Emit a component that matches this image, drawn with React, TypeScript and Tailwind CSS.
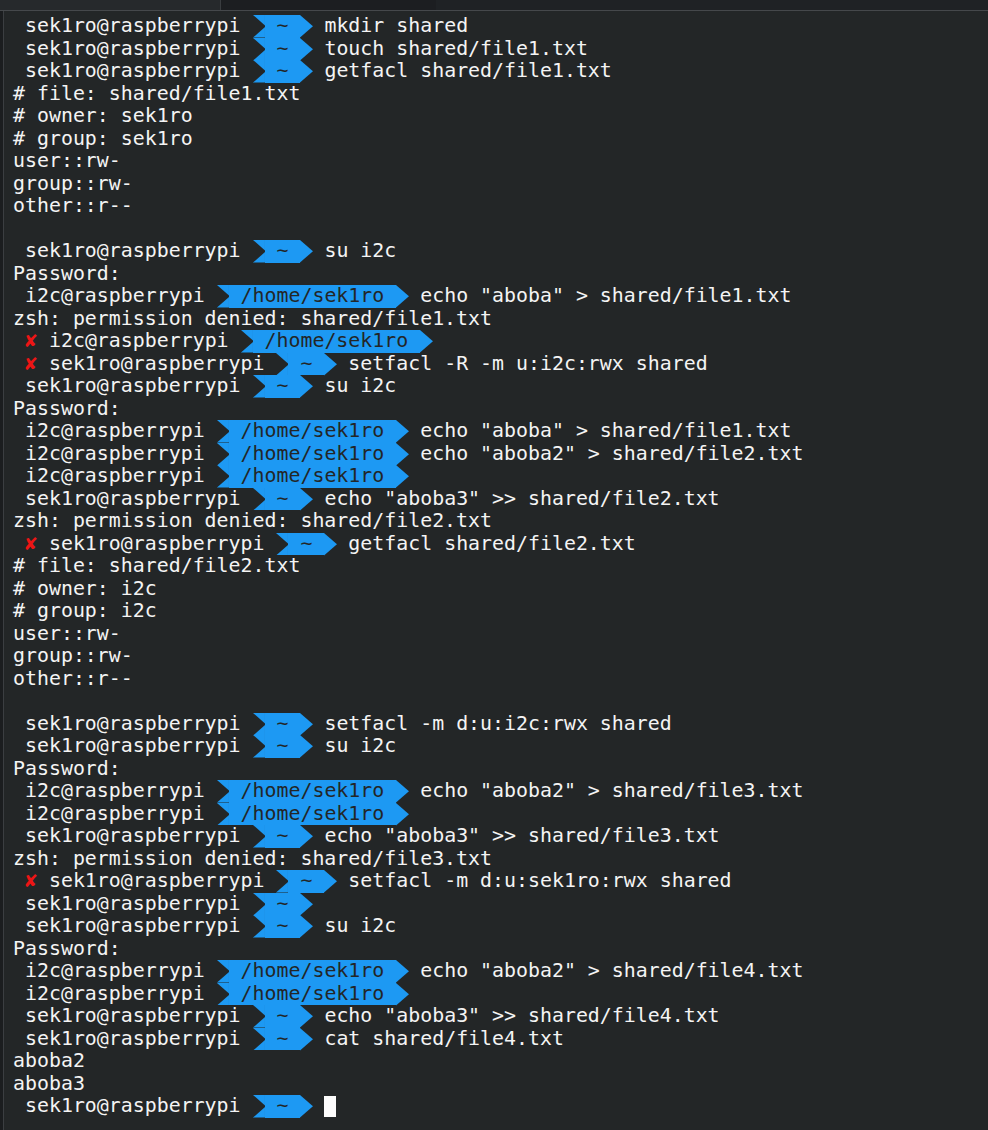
import React from "react";

type Line =
  | { t: "p"; u: "s" | "i"; err?: boolean; cmd?: string }
  | { t: "x"; s: string }
  | { t: "c" };

const L: Line[] = [
  { t: "p", u: "s", cmd: "mkdir shared" },
  { t: "p", u: "s", cmd: "touch shared/file1.txt" },
  { t: "p", u: "s", cmd: "getfacl shared/file1.txt" },
  { t: "x", s: "# file: shared/file1.txt" },
  { t: "x", s: "# owner: sek1ro" },
  { t: "x", s: "# group: sek1ro" },
  { t: "x", s: "user::rw-" },
  { t: "x", s: "group::rw-" },
  { t: "x", s: "other::r--" },
  { t: "x", s: "" },
  { t: "p", u: "s", cmd: "su i2c" },
  { t: "x", s: "Password:" },
  { t: "p", u: "i", cmd: 'echo "aboba" > shared/file1.txt' },
  { t: "x", s: "zsh: permission denied: shared/file1.txt" },
  { t: "p", u: "i", err: true },
  { t: "p", u: "s", err: true, cmd: "setfacl -R -m u:i2c:rwx shared" },
  { t: "p", u: "s", cmd: "su i2c" },
  { t: "x", s: "Password:" },
  { t: "p", u: "i", cmd: 'echo "aboba" > shared/file1.txt' },
  { t: "p", u: "i", cmd: 'echo "aboba2" > shared/file2.txt' },
  { t: "p", u: "i" },
  { t: "p", u: "s", cmd: 'echo "aboba3" >> shared/file2.txt' },
  { t: "x", s: "zsh: permission denied: shared/file2.txt" },
  { t: "p", u: "s", err: true, cmd: "getfacl shared/file2.txt" },
  { t: "x", s: "# file: shared/file2.txt" },
  { t: "x", s: "# owner: i2c" },
  { t: "x", s: "# group: i2c" },
  { t: "x", s: "user::rw-" },
  { t: "x", s: "group::rw-" },
  { t: "x", s: "other::r--" },
  { t: "x", s: "" },
  { t: "p", u: "s", cmd: "setfacl -m d:u:i2c:rwx shared" },
  { t: "p", u: "s", cmd: "su i2c" },
  { t: "x", s: "Password:" },
  { t: "p", u: "i", cmd: 'echo "aboba2" > shared/file3.txt' },
  { t: "p", u: "i" },
  { t: "p", u: "s", cmd: 'echo "aboba3" >> shared/file3.txt' },
  { t: "x", s: "zsh: permission denied: shared/file3.txt" },
  { t: "p", u: "s", err: true, cmd: "setfacl -m d:u:sek1ro:rwx shared" },
  { t: "p", u: "s" },
  { t: "p", u: "s", cmd: "su i2c" },
  { t: "x", s: "Password:" },
  { t: "p", u: "i", cmd: 'echo "aboba2" > shared/file4.txt' },
  { t: "p", u: "i" },
  { t: "p", u: "s", cmd: 'echo "aboba3" >> shared/file4.txt' },
  { t: "p", u: "s", cmd: "cat shared/file4.txt" },
  { t: "x", s: "aboba2" },
  { t: "x", s: "aboba3" },
  { t: "c" },
];

function SepStart() {
  return (
    <svg className="w-[1ch] h-[22.5px] shrink-0" viewBox="0 0 12 22.5" preserveAspectRatio="none">
      <rect x="0" y="0" width="12" height="22.5" fill="#1d99f3" />
      <polygon points="0,0 13,11.25 0,22.5" fill="#232627" />
    </svg>
  );
}

function SepEnd() {
  return (
    <svg className="w-[1ch] h-[22.5px] shrink-0 overflow-visible" viewBox="0 0 12 22.5" preserveAspectRatio="none">
      <polygon points="0,0 13,11.25 0,22.5" fill="#1d99f3" />
    </svg>
  );
}

function Prompt({ u, err, cmd, cursor }: { u: "s" | "i"; err?: boolean; cmd?: string; cursor?: boolean }) {
  const user = u === "s" ? "sek1ro" : "i2c";
  const path = u === "s" ? "~" : "/home/sek1ro";
  return (
    <div className="flex h-[22.5px] leading-[22.5px] whitespace-pre">
      <span> </span>
      {err && <span className="text-[#ed1515]">✘ </span>}
      <span>{user}@raspberrypi </span>
      <SepStart />
      <span className="bg-[#1d99f3] text-[#232627]"> {path} </span>
      <SepEnd />
      <span> </span>
      {cmd && <span>{cmd}</span>}
      {cursor && <span className="w-[1ch] h-[21px] mt-[0.5px] bg-[#fcfcfc]" />}
    </div>
  );
}

export default function App() {
  return (
    <div className="w-[988px] h-[1130px] bg-[#232627] overflow-hidden flex flex-col">
      <div className="flex h-[10px] shrink-0">
        <div className="w-[220px] bg-[#26292c]" />
        <div className="w-[1px] bg-[#3a3d40]" />
        <div className="w-[215px] bg-[#1c1e21]" />
        <div className="flex-1 bg-[#1f2225]" />
      </div>
      <div className="h-[1px] bg-[#45484b] shrink-0" />
      <div className="flex flex-1">
        <div className="w-[3px] bg-[#1b1d1f] shrink-0" />
        <div className="w-[1px] bg-[#3b3e41] shrink-0" />
        <div className="pl-[9px] pt-[4px] flex flex-col text-[#f4f4f4] text-[19.9px] font-['DejaVu_Sans_Mono',monospace]">
          {L.map((l, i) => {
            if (l.t === "x")
              return (
                <div key={i} className="h-[22.5px] leading-[22.5px] whitespace-pre">
                  {l.s}
                </div>
              );
            if (l.t === "c") return <Prompt key={i} u="s" cursor />;
            return <Prompt key={i} u={l.u} err={l.err} cmd={l.cmd} />;
          })}
        </div>
      </div>
    </div>
  );
}
